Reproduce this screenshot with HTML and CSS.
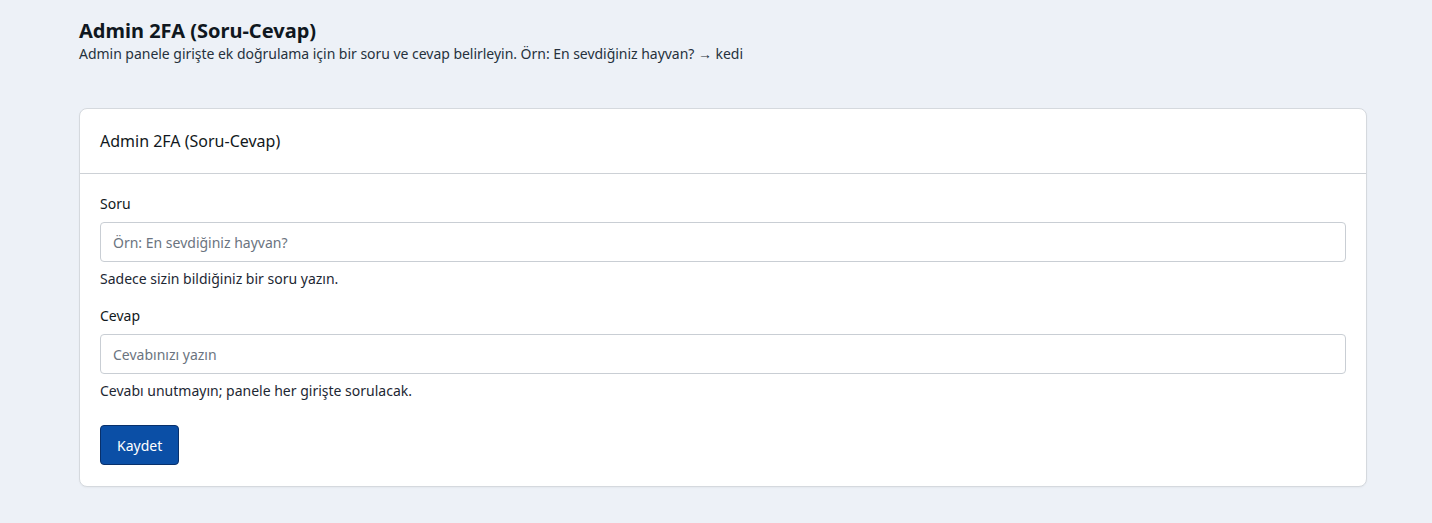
FILE: index.html
```html
<!DOCTYPE html>
<html lang="tr">
  <head>
    <meta charset="UTF-8" />
    <meta name="viewport" content="width=device-width, initial-scale=1.0" />
    <title>Admin 2FA</title>
    <link rel="stylesheet" href="styles.css">
  </head>
  <body>
    <div class="page">
      <div class="page-head">
        <h1 class="page-title">Admin 2FA (Soru-Cevap)</h1>
        <p class="page-sub">Admin panele girişte ek doğrulama için bir soru ve cevap belirleyin. Örn: En sevdiğiniz hayvan? → kedi</p>
      </div>

      <div class="card">
        <div class="card-header">Admin 2FA (Soru-Cevap)</div>
        <form class="card-body" onsubmit="return false">
          <div class="field">
            <label class="field-label" for="soru">Soru</label>
            <input id="soru" class="field-input" type="text" placeholder="Örn: En sevdiğiniz hayvan?" />
            <div class="field-help">Sadece sizin bildiğiniz bir soru yazın.</div>
          </div>
          <div class="field">
            <label class="field-label" for="cevap">Cevap</label>
            <input id="cevap" class="field-input" type="text" placeholder="Cevabınızı yazın" />
            <div class="field-help">Cevabı unutmayın; panele her girişte sorulacak.</div>
          </div>
          <button class="btn-save" type="submit">Kaydet</button>
        </form>
      </div>
    </div>
  </body>
</html>
```

FILE: styles.css
```css
* {
  margin: 0;
  padding: 0;
  box-sizing: border-box;
}

body {
  font-family: "Noto Sans", "Open Sans", sans-serif;
  background: #edf1f7;
  color: #1d2733;
  min-height: 100vh;
}

.page {
  padding: 19px 65px 36px 79px;
}

.page-head {
  margin-bottom: 43px;
}

.page-title {
  font-size: 20px;
  font-weight: 700;
  line-height: 24px;
  color: #0f1720;
}

.page-sub {
  font-size: 14px;
  line-height: 22px;
  color: #26313d;
  letter-spacing: -0.03px;
}

.card {
  background: #ffffff;
  border: 1px solid #d5d9de;
  border-radius: 8px;
  box-shadow: 0 1px 2px rgba(0, 0, 0, 0.04);
}

.card-header {
  padding: 0 20px;
  height: 65px;
  display: flex;
  align-items: center;
  font-size: 16px;
  color: #111820;
  border-bottom: 1px solid #cdd1d6;
}

.card-body {
  padding: 19px 20px 21px;
  display: flex;
  flex-direction: column;
  align-items: flex-start;
}

.field {
  width: 100%;
  margin-bottom: 15px;
}

.field-label {
  display: block;
  font-size: 14px;
  line-height: 22px;
  margin-bottom: 7px;
  color: #111820;
}

.field-input {
  display: block;
  width: 100%;
  height: 40px;
  padding: 0 12px;
  font-family: inherit;
  font-size: 14px;
  color: #1d2733;
  background: #ffffff;
  border: 1px solid #c9ced4;
  border-radius: 4px;
  outline: none;
}

.field-input::placeholder {
  color: #6b7480;
}

.field-help {
  font-size: 14px;
  line-height: 22px;
  margin-top: 6px;
  color: #1d2733;
}

.btn-save {
  margin-top: 8px;
  height: 40px;
  padding: 0 16px;
  font-family: inherit;
  font-size: 14px;
  color: #ffffff;
  background: #0b4fa6;
  border: 1px solid #08306b;
  border-radius: 4px;
  cursor: pointer;
}
```
